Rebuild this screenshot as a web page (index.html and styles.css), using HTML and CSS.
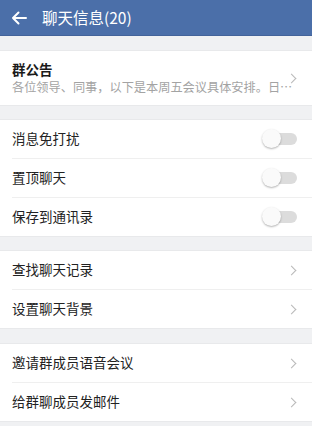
FILE: index.html
```html
<!DOCTYPE html>
<html lang="zh">
<head>
<meta charset="utf-8">
<link rel="stylesheet" href="styles.css">
</head>
<body>
<div class="page">
  <header class="bar">
    <svg class="back" width="16" height="14" viewBox="0 0 16 14"><path d="M15 7H2M7.5 1.5L2 7l5.5 5.5" fill="none" stroke="#fff" stroke-width="2" stroke-linecap="round" stroke-linejoin="round"/></svg>
    <span class="title">聊天信息(20)</span>
  </header>

  <section class="group">
    <div class="row notice">
      <div class="notice-text">
        <div class="notice-title">群公告</div>
        <div class="notice-sub">各位领导、同事，以下是本周五会议具体安排。日…</div>
      </div>
      <span class="chev"></span>
    </div>
  </section>

  <section class="group">
    <div class="row"><span class="label">消息免打扰</span><span class="toggle"></span></div>
    <div class="row"><span class="label">置顶聊天</span><span class="toggle"></span></div>
    <div class="row"><span class="label">保存到通讯录</span><span class="toggle"></span></div>
  </section>

  <section class="group">
    <div class="row"><span class="label">查找聊天记录</span><span class="chev"></span></div>
    <div class="row"><span class="label">设置聊天背景</span><span class="chev"></span></div>
  </section>

  <section class="group">
    <div class="row"><span class="label">邀请群成员语音会议</span><span class="chev"></span></div>
    <div class="row"><span class="label">给群聊成员发邮件</span><span class="chev"></span></div>
  </section>
</div>
</body>
</html>
```

FILE: styles.css
```css
* { box-sizing: border-box; margin: 0; padding: 0; }
html, body { width: 312px; height: 426px; overflow: hidden; }
body {
  background: #f0f1f3;
  font-family: "Noto Sans CJK SC", "Noto Sans", sans-serif;
  color: #222;
}
.page { display: flex; flex-direction: column; }
.bar {
  height: 36px;
  background: #4b6fa9;
  display: flex;
  align-items: center;
  padding-left: 11px;
  border-bottom: 1px solid #43639a;
}
.back { display: block; }
.title {
  color: #fff;
  font-size: 15.5px;
  margin-left: 15px;
  line-height: 1;
}
.group {
  background: #fff;
  margin-top: 14px;
  border-top: 1px solid #e8e9eb;
  border-bottom: 1px solid #e8e9eb;
}
.group:nth-of-type(2), .group:nth-of-type(3) { margin-top: 13px; }
.row {
  height: 39px;
  display: flex;
  align-items: center;
  justify-content: space-between;
  margin-left: 12px;
  padding-right: 14px;
  border-top: 1px solid #efefef;
}
.row:first-child { border-top: none; height: 38px; }
.label { font-size: 13.5px; line-height: 1; color: #222; }
.notice { height: 54px !important; }
.notice-text { display: flex; flex-direction: column; gap: 5px; min-width: 0; }
.notice-title { font-size: 13.5px; font-weight: bold; line-height: 1; color: #1a1a1a; }
.notice-sub { font-size: 12.2px; line-height: 1; color: #a3a3a3; white-space: nowrap; }
.chev {
  width: 7px; height: 7px;
  border-top: 1px solid #b8b8b8;
  border-right: 1px solid #b8b8b8;
  transform: rotate(45deg);
  margin-right: 3px;
  flex: none;
}
.toggle {
  position: relative;
  width: 33px; height: 12px;
  background: #dcdcdc;
  border-radius: 6px;
  margin-right: 1px;
  flex: none;
}
.toggle::before {
  content: "";
  position: absolute;
  left: -2px; top: -4px;
  width: 19px; height: 19px;
  border-radius: 50%;
  background: #fafafa;
  box-shadow: 0 1px 2px rgba(0,0,0,0.3);
}
```
